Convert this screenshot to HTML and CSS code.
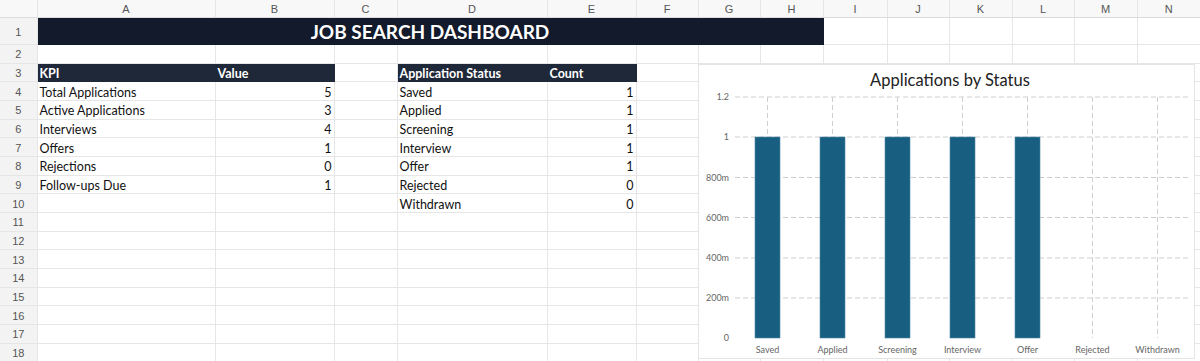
FILE: index.html
```html
<!DOCTYPE html>
<html lang="en">
<head>
  <meta charset="UTF-8" />
  <title>Job Search Dashboard</title>
  <link rel="stylesheet" href="styles.css">
</head>
<body>

<div class="sheet">
  <table class="grid">
    <colgroup>
      <col class="c-rh"><col class="c-a"><col class="c-b"><col class="c-c"><col class="c-d"><col class="c-e">
      <col class="c-f"><col class="c-g"><col class="c-h"><col class="c-i"><col class="c-j"><col class="c-k">
      <col class="c-l"><col class="c-m"><col class="c-n">
    </colgroup>
    <tr class="colhead">
      <th></th><th>A</th><th>B</th><th>C</th><th>D</th><th>E</th><th>F</th><th>G</th><th>H</th><th>I</th><th>J</th><th>K</th><th>L</th><th>M</th><th>N</th>
    </tr>
    <tr class="r-title">
      <th>1</th><td colspan="8" class="title">JOB SEARCH DASHBOARD</td><td></td><td></td><td></td><td></td><td></td><td></td>
    </tr>
    <tr><th>2</th><td></td><td></td><td></td><td></td><td></td><td></td><td></td><td></td><td></td><td></td><td></td><td></td><td></td><td></td></tr>
    <tr>
      <th>3</th><td class="hd">KPI</td><td class="hd">Value</td><td></td><td class="hd">Application Status</td><td class="hd">Count</td>
      <td></td><td></td><td></td><td></td><td></td><td></td><td></td><td></td><td></td>
    </tr>
    <tr><th>4</th><td>Total Applications</td><td class="num">5</td><td></td><td>Saved</td><td class="num">1</td><td></td><td></td><td></td><td></td><td></td><td></td><td></td><td></td><td></td></tr>
    <tr><th>5</th><td>Active Applications</td><td class="num">3</td><td></td><td>Applied</td><td class="num">1</td><td></td><td></td><td></td><td></td><td></td><td></td><td></td><td></td><td></td></tr>
    <tr><th>6</th><td>Interviews</td><td class="num">4</td><td></td><td>Screening</td><td class="num">1</td><td></td><td></td><td></td><td></td><td></td><td></td><td></td><td></td><td></td></tr>
    <tr><th>7</th><td>Offers</td><td class="num">1</td><td></td><td>Interview</td><td class="num">1</td><td></td><td></td><td></td><td></td><td></td><td></td><td></td><td></td><td></td></tr>
    <tr><th>8</th><td>Rejections</td><td class="num">0</td><td></td><td>Offer</td><td class="num">1</td><td></td><td></td><td></td><td></td><td></td><td></td><td></td><td></td><td></td></tr>
    <tr><th>9</th><td>Follow-ups Due</td><td class="num">1</td><td></td><td>Rejected</td><td class="num">0</td><td></td><td></td><td></td><td></td><td></td><td></td><td></td><td></td><td></td></tr>
    <tr><th>10</th><td></td><td></td><td></td><td>Withdrawn</td><td class="num">0</td><td></td><td></td><td></td><td></td><td></td><td></td><td></td><td></td><td></td></tr>
    <tr><th>11</th><td></td><td></td><td></td><td></td><td></td><td></td><td></td><td></td><td></td><td></td><td></td><td></td><td></td><td></td></tr>
    <tr><th>12</th><td></td><td></td><td></td><td></td><td></td><td></td><td></td><td></td><td></td><td></td><td></td><td></td><td></td><td></td></tr>
    <tr><th>13</th><td></td><td></td><td></td><td></td><td></td><td></td><td></td><td></td><td></td><td></td><td></td><td></td><td></td><td></td></tr>
    <tr><th>14</th><td></td><td></td><td></td><td></td><td></td><td></td><td></td><td></td><td></td><td></td><td></td><td></td><td></td><td></td></tr>
    <tr><th>15</th><td></td><td></td><td></td><td></td><td></td><td></td><td></td><td></td><td></td><td></td><td></td><td></td><td></td><td></td></tr>
    <tr><th>16</th><td></td><td></td><td></td><td></td><td></td><td></td><td></td><td></td><td></td><td></td><td></td><td></td><td></td><td></td></tr>
    <tr><th>17</th><td></td><td></td><td></td><td></td><td></td><td></td><td></td><td></td><td></td><td></td><td></td><td></td><td></td><td></td></tr>
    <tr><th>18</th><td></td><td></td><td></td><td></td><td></td><td></td><td></td><td></td><td></td><td></td><td></td><td></td><td></td><td></td></tr>
  </table>

  <!-- chart floats over the cells, like an embedded sheet chart -->
  <div class="chart">
    <svg width="497" height="295" viewBox="0 0 497 295">
      <text class="chart-title" x="252" y="22" text-anchor="middle">Applications by Status</text>

      <g class="gridlines">
        <line x1="37" y1="33" x2="490" y2="33"/>
        <line x1="37" y1="73" x2="490" y2="73"/>
        <line x1="37" y1="113.5" x2="490" y2="113.5"/>
        <line x1="37" y1="153.5" x2="490" y2="153.5"/>
        <line x1="37" y1="194" x2="490" y2="194"/>
        <line x1="37" y1="234" x2="490" y2="234"/>
        <line x1="69.5" y1="33" x2="69.5" y2="274"/>
        <line x1="134.5" y1="33" x2="134.5" y2="274"/>
        <line x1="199.5" y1="33" x2="199.5" y2="274"/>
        <line x1="264.5" y1="33" x2="264.5" y2="274"/>
        <line x1="329.5" y1="33" x2="329.5" y2="274"/>
        <line x1="394.5" y1="33" x2="394.5" y2="274"/>
        <line x1="459.5" y1="33" x2="459.5" y2="274"/>
      </g>

      <g class="ylabels" text-anchor="end">
        <text x="31" y="36">1.2</text>
        <text x="31" y="76">1</text>
        <text x="31" y="116.5">800m</text>
        <text x="31" y="156.5">600m</text>
        <text x="31" y="197">400m</text>
        <text x="31" y="237">200m</text>
        <text x="31" y="277">0</text>
      </g>

      <g class="bars">
        <rect x="57" y="73" width="25" height="201"/>
        <rect x="122" y="73" width="25" height="201"/>
        <rect x="187" y="73" width="25" height="201"/>
        <rect x="252" y="73" width="25" height="201"/>
        <rect x="317" y="73" width="25" height="201"/>
      </g>

      <g class="xlabels" text-anchor="middle">
        <text x="69.5" y="289">Saved</text>
        <text x="134.5" y="289">Applied</text>
        <text x="199.5" y="289">Screening</text>
        <text x="264.5" y="289">Interview</text>
        <text x="329.5" y="289">Offer</text>
        <text x="394.5" y="289">Rejected</text>
        <text x="459.5" y="289">Withdrawn</text>
      </g>
    </svg>
  </div>
</div>

</body>
</html>
```

FILE: styles.css
```css
body { margin: 0; background: #fff; font-family: Lato, "Liberation Sans", sans-serif; overflow: hidden; }
.sheet { position: relative; width: 1200px; height: 361px; overflow: hidden; }

.grid { border-collapse: collapse; table-layout: fixed; width: 1200px; }
.grid td, .grid th { border: 1px solid #e6e6e6; padding: 2px 2px 0; height: 15.67px; white-space: nowrap; overflow: hidden; font-size: 12.5px; color: #111; line-height: 15px; vertical-align: middle; }
.grid th { background: #f3f3f3; color: #555; font-family: "Liberation Sans", Arial, sans-serif; font-weight: normal; font-size: 11px; text-align: center; }
.grid tr:first-child td, .grid tr:first-child th { border-top: none; }
.grid td:last-child, .grid th:last-child { border-right: none; }
.grid td:first-child, .grid th:first-child { border-left: none; }

.grid .colhead th { background: #f8f8f8; height: 15px; border-bottom: 1px solid #dcdcdc; }
.grid .r-title th, .grid .r-title td { height: 24px; }

.c-rh { width: 37px; }
.c-a { width: 178px; }
.c-b { width: 119px; }
.c-c { width: 63px; }
.c-d { width: 150px; }
.c-e { width: 89px; }
.c-f, .c-g, .c-j, .c-l { width: 62px; }
.c-h, .c-k, .c-m, .c-n { width: 63px; }
.c-i { width: 64px; }

.grid .title { background: #121a2b; color: #fff; font-weight: 700; font-size: 19px; line-height: 22px; text-align: center; border-color: #121a2b; }
.grid .hd { background: #1f2838; color: #fff; font-weight: 700; border-color: #1f2838; }
.grid .num { text-align: right; }

.chart { position: absolute; left: 698px; top: 64px; width: 497px; height: 295px; background: #fff; border: 1px solid #e4e4e4; box-sizing: border-box; }
.chart svg { display: block; position: absolute; left: -1px; top: -1px; }
.chart-title { font-family: Lato, "Liberation Sans", sans-serif; font-size: 16.5px; fill: #222; }
.gridlines line { stroke: #cfcfcf; stroke-width: 1; stroke-dasharray: 5 3; }
.ylabels text { font-family: Lato, "Liberation Sans", sans-serif; font-size: 9px; fill: #666; }
.xlabels text { font-family: Lato, "Liberation Sans", sans-serif; font-size: 9px; fill: #666; }
.bars rect { fill: #175e80; stroke: #4f87a3; stroke-width: 0.6; }
```
